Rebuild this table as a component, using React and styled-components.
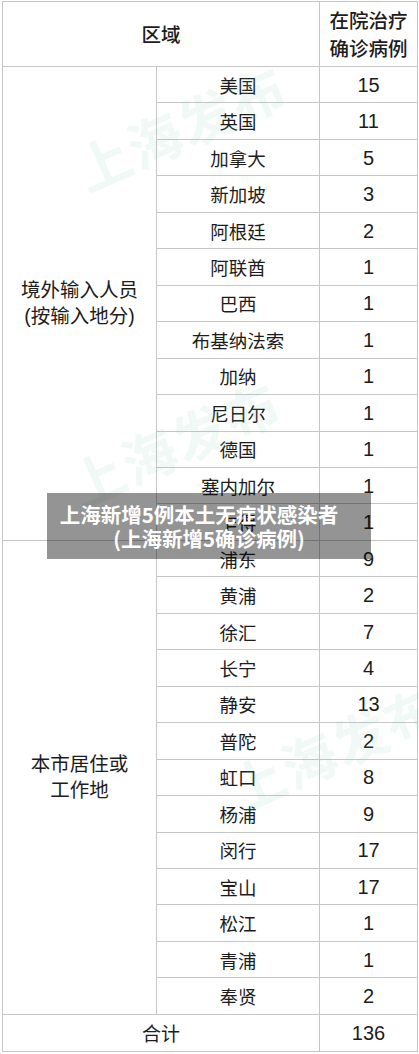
import React from "react";
import styled, { createGlobalStyle } from "styled-components";

const GlobalStyle = createGlobalStyle`
  html, body {
    margin: 0;
    padding: 0;
    background: #fff;
  }
  body {
    font-family: "Liberation Sans", "Noto Sans CJK SC", sans-serif;
    color: #1c1c1c;
  }
`;

const foreign = [
  ["美国", 15],
  ["英国", 11],
  ["加拿大", 5],
  ["新加坡", 3],
  ["阿根廷", 2],
  ["阿联酋", 1],
  ["巴西", 1],
  ["布基纳法索", 1],
  ["加纳", 1],
  ["尼日尔", 1],
  ["德国", 1],
  ["塞内加尔", 1],
  ["乍得", 1],
];

const local = [
  ["浦东", 9],
  ["黄浦", 2],
  ["徐汇", 7],
  ["长宁", 4],
  ["静安", 13],
  ["普陀", 2],
  ["虹口", 8],
  ["杨浦", 9],
  ["闵行", 17],
  ["宝山", 17],
  ["松江", 1],
  ["青浦", 1],
  ["奉贤", 2],
];

const watermarks = [
  { left: 78, top: 132 },
  { left: 72, top: 448 },
  { left: 232, top: 752 },
];

export default function App() {
  return (
    <>
      <GlobalStyle />
      <Page>
        <Grid>
          <HeaderCell $span={2}>区域</HeaderCell>
          <HeaderCell>
            在院治疗
            <br />
            确诊病例
          </HeaderCell>

          <GroupCell $rows={foreign.length}>
            境外输入人员
            <br />
            (按输入地分)
          </GroupCell>
          {foreign.map(([name, n]) => (
            <React.Fragment key={name}>
              <NameCell>{name}</NameCell>
              <NumCell>{n}</NumCell>
            </React.Fragment>
          ))}

          <GroupCell $rows={local.length}>
            本市居住或
            <br />
            工作地
          </GroupCell>
          {local.map(([name, n]) => (
            <React.Fragment key={name}>
              <NameCell>{name}</NameCell>
              <NumCell>{n}</NumCell>
            </React.Fragment>
          ))}

          <TotalCell $span={2}>合计</TotalCell>
          <NumCell>136</NumCell>
        </Grid>

        {watermarks.map((w, i) => (
          <Watermark key={i} style={{ left: w.left, top: w.top }}>
            上海发布
          </Watermark>
        ))}

        <Caption>
          <CaptionLine $shift>上海新增5例本土无症状感染者</CaptionLine>
          <CaptionLine>(上海新增5确诊病例)</CaptionLine>
        </Caption>
      </Page>
    </>
  );
}

const Page = styled.div`
  position: relative;
  width: 419px;
  height: 1054px;
  overflow: hidden;
  background: #fff;
`;

const Grid = styled.div`
  display: grid;
  grid-template-columns: 154px 163px 98px;
  grid-template-rows: 65px repeat(26, 36.46px) 37px;
  margin: 1px 0 0 2px;
  border-top: 1px solid #c6c6c6;
  border-left: 1px solid #c6c6c6;
  box-sizing: border-box;
  width: 416px;
`;

const Cell = styled.div`
  display: flex;
  align-items: center;
  justify-content: center;
  text-align: center;
  border-right: 1px solid #c6c6c6;
  border-bottom: 1px solid #c6c6c6;
  box-sizing: border-box;
  grid-column: span ${(p) => p.$span || 1};
`;

const HeaderCell = styled(Cell)`
  font-size: 19.5px;
  font-weight: 500;
  line-height: 28px;
  padding-top: 1px;
`;

const GroupCell = styled(Cell)`
  grid-row: span ${(p) => p.$rows};
  font-size: 19.5px;
  line-height: 26px;
`;

const NameCell = styled(Cell)`
  font-size: 18.5px;
`;

const NumCell = styled(Cell)`
  font-size: 20px;
  padding-top: 1px;
`;

const TotalCell = styled(Cell)`
  font-size: 19px;
`;

const Watermark = styled.div`
  position: absolute;
  font-family: "Noto Sans CJK SC", sans-serif;
  font-size: 54px;
  font-weight: 700;
  letter-spacing: 2px;
  color: rgba(120, 196, 172, 0.11);
  transform: rotate(-24deg);
  transform-origin: left center;
  white-space: nowrap;
  pointer-events: none;
`;

const Caption = styled.div`
  position: absolute;
  left: 47px;
  top: 493px;
  width: 324px;
  height: 66px;
  background: rgba(0, 0, 0, 0.42);
  display: flex;
  flex-direction: column;
  align-items: center;
  justify-content: center;
  color: #fff;
  font-family: "Noto Sans CJK SC", sans-serif;
  font-weight: 700;
  font-size: 20.5px;
  line-height: 24px;
`;

const CaptionLine = styled.div`
  white-space: nowrap;
  padding-right: ${(p) => (p.$shift ? "20px" : "0")};
`;
